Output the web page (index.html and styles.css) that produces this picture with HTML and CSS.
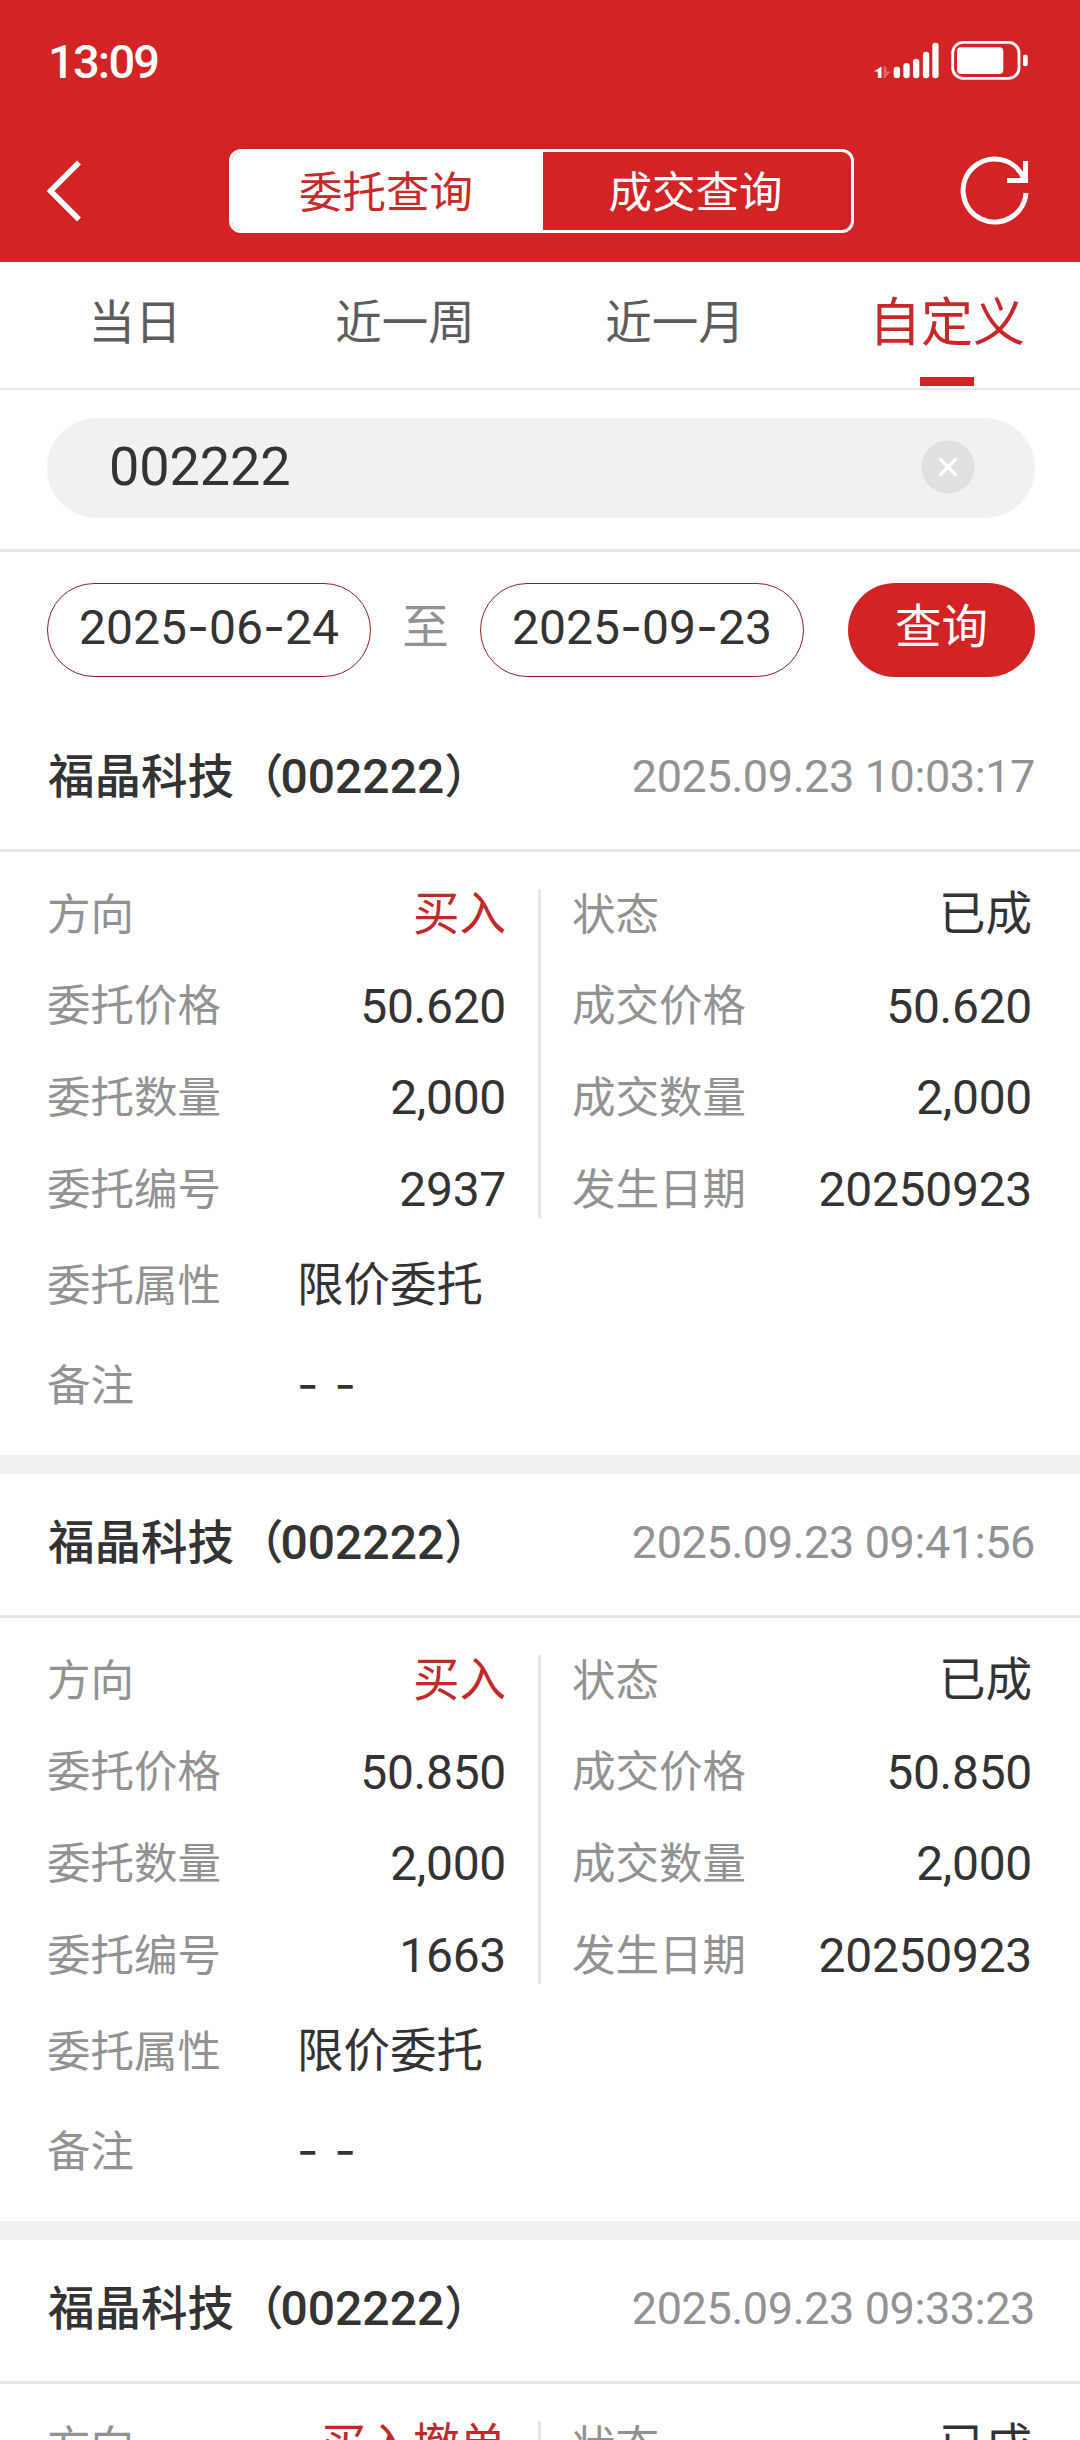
FILE: index.html
```html
<!DOCTYPE html>
<html lang="zh-CN">
<head>
    <meta charset="UTF-8">
    <title>委托查询</title>
    <link rel="stylesheet" href="styles.css">
</head>
<body>
<div class="header">
    <div class="status">
        <span class="time">13:09</span>
        <svg class="status-icons" width="156" height="42" viewBox="0 0 156 42">
            <path d="M2 31.500L9.500 26.500V38H5.800V31.500Z" fill="#fff"/>
            <path d="M11.500 26.500H14.500V31.500H18.500L13 38H11.500Z" fill="#fff" opacity=".3"/>
            <g fill="#fff">
                <rect x="21.700" y="26.700" width="6.300" height="11.500" rx="3"/>
                <rect x="31.400" y="23" width="6.300" height="15.200" rx="3"/>
                <rect x="41" y="18.700" width="6.300" height="19.500" rx="3"/>
                <rect x="50.900" y="11.700" width="6.300" height="26.500" rx="3"/>
                <rect x="60.300" y="2.700" width="6.300" height="35.500" rx="3"/>
                <rect x="85" y="7.300" width="46.300" height="26.700" rx="4"/>
                <rect x="151" y="14.700" width="4.700" height="11.600" rx="2"/>
            </g>
            <rect x="80.700" y="2.400" width="66.300" height="36" rx="10.500" fill="none" stroke="#fff" stroke-width="2.800"/>
        </svg>
    </div>
    <div class="nav">
        <svg class="back" width="36" height="62" viewBox="0 0 36 62">
            <path d="M33 2.500L4.500 31L33 59.500" fill="none" stroke="#fff" stroke-width="5.500"/>
        </svg>
        <div class="switch">
            <a class="on">委托查询</a>
            <a>成交查询</a>
        </div>
        <svg class="refresh" width="70" height="70" viewBox="0 0 70 70">
            <path d="M66 37A31.500 31.500 0 1 1 63.500 22M65.500 5V24.500M68 24.500H47" fill="none" stroke="#fff" stroke-width="5"/>
        </svg>
    </div>
</div>
<ul class="tabs">
    <li>当日</li>
    <li>近一周</li>
    <li>近一月</li>
    <li class="on">自定义</li>
</ul>
<div class="search">
    <div class="search-box">
        <span>002222</span>
        <svg width="54" height="54" viewBox="0 0 54 54">
            <circle cx="27" cy="27" r="26.500" fill="#e0e0e0"/>
            <path d="M19.500 19.500L34.500 34.500M34.500 19.500L19.500 34.500" stroke="#fff" stroke-width="3.500" stroke-linecap="round"/>
        </svg>
    </div>
</div>
<div class="filter">
    <span class="date">2025<i>-</i>06<i>-</i>24</span>
    <span class="to">至</span>
    <span class="date">2025<i>-</i>09<i>-</i>23</span>
    <a class="btn">查询</a>
</div>

<div class="record">
    <div class="title">
        <h3>福晶科技<s>（</s><b>002222</b>）</h3>
        <span>2025.09.23 10:03:17</span>
    </div>
    <div class="cols">
        <ul class="left">
            <li><label>方向</label><em class="red">买入</em></li>
            <li><label>委托价格</label><em class="num">50.620</em></li>
            <li><label>委托数量</label><em class="num">2,000</em></li>
            <li><label>委托编号</label><em class="num">2937</em></li>
        </ul>
        <div class="line"></div>
        <ul class="right">
            <li><label>状态</label><em>已成</em></li>
            <li><label>成交价格</label><em class="num">50.620</em></li>
            <li><label>成交数量</label><em class="num">2,000</em></li>
            <li><label>发生日期</label><em class="num">20250923</em></li>
        </ul>
    </div>
    <ul class="more">
        <li><label>委托属性</label><em>限价委托</em></li>
        <li><label>备注</label><em class="none">- -</em></li>
    </ul>
</div>

<div class="record">
    <div class="title">
        <h3>福晶科技<s>（</s><b>002222</b>）</h3>
        <span>2025.09.23 09:41:56</span>
    </div>
    <div class="cols">
        <ul class="left">
            <li><label>方向</label><em class="red">买入</em></li>
            <li><label>委托价格</label><em class="num">50.850</em></li>
            <li><label>委托数量</label><em class="num">2,000</em></li>
            <li><label>委托编号</label><em class="num">1663</em></li>
        </ul>
        <div class="line"></div>
        <ul class="right">
            <li><label>状态</label><em>已成</em></li>
            <li><label>成交价格</label><em class="num">50.850</em></li>
            <li><label>成交数量</label><em class="num">2,000</em></li>
            <li><label>发生日期</label><em class="num">20250923</em></li>
        </ul>
    </div>
    <ul class="more">
        <li><label>委托属性</label><em>限价委托</em></li>
        <li><label>备注</label><em class="none">- -</em></li>
    </ul>
</div>

<div class="record last">
    <div class="title">
        <h3>福晶科技<s>（</s><b>002222</b>）</h3>
        <span>2025.09.23 09:33:23</span>
    </div>
    <div class="cols">
        <ul class="left">
            <li><label>方向</label><em class="red">买入撤单</em></li>
        </ul>
        <div class="line"></div>
        <ul class="right">
            <li><label>状态</label><em>已成</em></li>
        </ul>
    </div>
</div>
</body>
</html>
```
FILE: styles.css
```css
*{margin:0;padding:0;box-sizing:border-box;}
body{width:1080px;height:2440px;overflow:hidden;background:#fff;color:#333;font:46.5px/1.2 Roboto,"Noto Sans CJK SC",sans-serif;}
ul,li{list-style:none;}
em,i{font-style:normal;}
s{text-decoration:none;}
svg{display:block;flex:none;}

/* 顶部 */
.header{height:262px;background:#d22425;color:#fff;}
.status{display:flex;justify-content:space-between;height:121px;padding:40px 52px 0 48px;}
.time{font-size:47px;line-height:44px;font-weight:500;letter-spacing:-1.8px;}
.nav{display:flex;align-items:center;height:141px;padding:0 50px 1px 46px;}
.switch{display:flex;width:625px;height:84px;margin:0 auto 0 147px;border:3px solid #fff;border-radius:12px;overflow:hidden;}
.switch a{flex:1;padding-right:3px;font-size:43.5px;line-height:83px;text-align:center;}
.switch .on{flex:none;width:311px;background:#fff;color:#c62a2b;}

/* 时间范围 */
.tabs{display:flex;height:128px;border-bottom:2px solid #e8e8e8;}
.tabs li{width:270px;height:124px;line-height:122px;text-align:center;color:#5c5c5c;}
.tabs .on{display:flex;flex-direction:column;align-items:center;justify-content:space-between;padding:8px 0 0 4px;font-size:52px;line-height:107px;color:#c9282a;}
.tabs .on:after{content:"";flex:none;width:54px;height:9px;background:#d22425;}

.search{height:162px;padding:28px 45px 0 47px;border-bottom:3px solid #e6e6e6;}
.search-box{display:flex;align-items:center;justify-content:space-between;height:100px;padding:0 60px 3px 62px;border-radius:50px;background:#f1f1f1;}
.search-box span{padding-top:1px;font-size:54px;letter-spacing:-.1px;}

.filter{display:flex;height:156px;padding:31px 45px 0 47px;}
.date{width:324px;height:94px;border:1px solid #8e2226;border-radius:47px;font-size:48px;line-height:86px;text-align:center;}
.date i,.more .none{font-family:Inter,Roboto,sans-serif;}
.to{width:109px;line-height:88px;text-align:center;color:#929292;}
.btn{width:187px;height:94px;margin-left:44px;border-radius:47px;background:#d22425;color:#fff;line-height:89px;text-align:center;}

/* 委托记录 */
.record{border-bottom:19px solid #f1f1f1;}
.title{display:flex;align-items:center;justify-content:space-between;height:144px;padding:0 45px 3px 48px;border-bottom:3px solid #e6e6e6;}
.title h3{font-size:46.5px;font-weight:500;}
.title s{margin:0 -3px 0 3px;}
.title b{font-size:48px;font-weight:500;}
.title span{font-size:45px;letter-spacing:-.4px;color:#929292;}
.cols{display:flex;height:384px;padding-top:17px;}
.cols li{display:flex;align-items:center;justify-content:space-between;height:91.7px;}
.left{width:538px;padding:0 32px 0 47px;}
.right{width:539px;padding:0 48px 0 31px;}
.line{width:3px;margin:20px 0 18px;background:#e6e6e6;}
.record label{padding-top:2px;font-size:43.5px;color:#929292;}
.record .num{font-size:48px;letter-spacing:-.3px;}
.record .red{color:#c02a2b;}
.more{height:219px;}
.more li{display:flex;align-items:center;height:100px;padding-left:47px;}
.more label{width:250px;}
.more .none{padding-bottom:2px;word-spacing:3px;}

/* 最后一条只露出第一行 */
.last{height:219px;border:0;overflow:hidden;}
.last .cols{height:72px;}
.last .line{margin-bottom:0;}
```
